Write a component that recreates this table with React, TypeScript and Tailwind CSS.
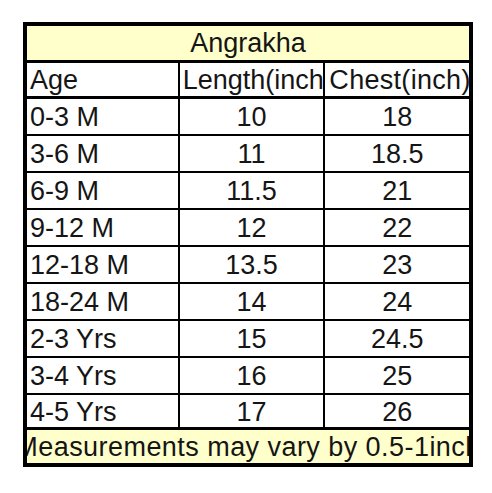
import React from "react";

const rows: [string, string, string][] = [
  ["0-3 M", "10", "18"],
  ["3-6 M", "11", "18.5"],
  ["6-9 M", "11.5", "21"],
  ["9-12 M", "12", "22"],
  ["12-18 M", "13.5", "23"],
  ["18-24 M", "14", "24"],
  ["2-3 Yrs", "15", "24.5"],
  ["3-4 Yrs", "16", "25"],
  ["4-5 Yrs", "17", "26"],
];

export default function App() {
  return (
    <div className="w-[492px] h-[493px] bg-white pt-[22px] pl-[23px]" style={{ fontFamily: '"Liberation Sans", Arial, sans-serif' }}>
      <div className="w-[450px] border-4 border-black text-[27px] text-[#151515]">
        <div className="h-[34px] bg-[#ffffcc] leading-[34px] text-center border-b-[3px] border-black box-content">
          Angrakha
        </div>
        <div className="flex h-[33px] leading-[34px] border-b-[3px] border-black box-content">
          <div className="w-[148px] border-r-2 border-black pl-[3px] overflow-hidden whitespace-nowrap box-content">Age</div>
          <div className="w-[146px] border-r-2 border-black pl-[3px] overflow-hidden whitespace-nowrap">Length(inch)</div>
          <div className="w-[144px] pl-[4px] overflow-hidden whitespace-nowrap tracking-[0.3px]">Chest(inch)</div>
        </div>
        {rows.map((r, i) => {
          const last = i === rows.length - 1;
          return (
            <div
              key={r[0]}
              className={
                last
                  ? "flex h-[32px] leading-[34px] border-b-[3px] border-black box-content"
                  : "flex h-[35px] leading-[37px] border-b-2 border-black box-content"
              }
            >
              <div className="w-[148px] border-r-2 border-black pl-[3px] whitespace-nowrap box-content">{r[0]}</div>
              <div className="w-[146px] border-r-2 border-black text-center">{r[1]}</div>
              <div className="w-[144px] text-center">{r[2]}</div>
            </div>
          );
        })}
        <div className="h-[33px] leading-[34px] bg-[#ffffcc] flex justify-center overflow-hidden whitespace-nowrap">
          <span className="shrink-0 tracking-[0.45px]">Measurements may vary by 0.5-1inch</span>
        </div>
      </div>
    </div>
  );
}
